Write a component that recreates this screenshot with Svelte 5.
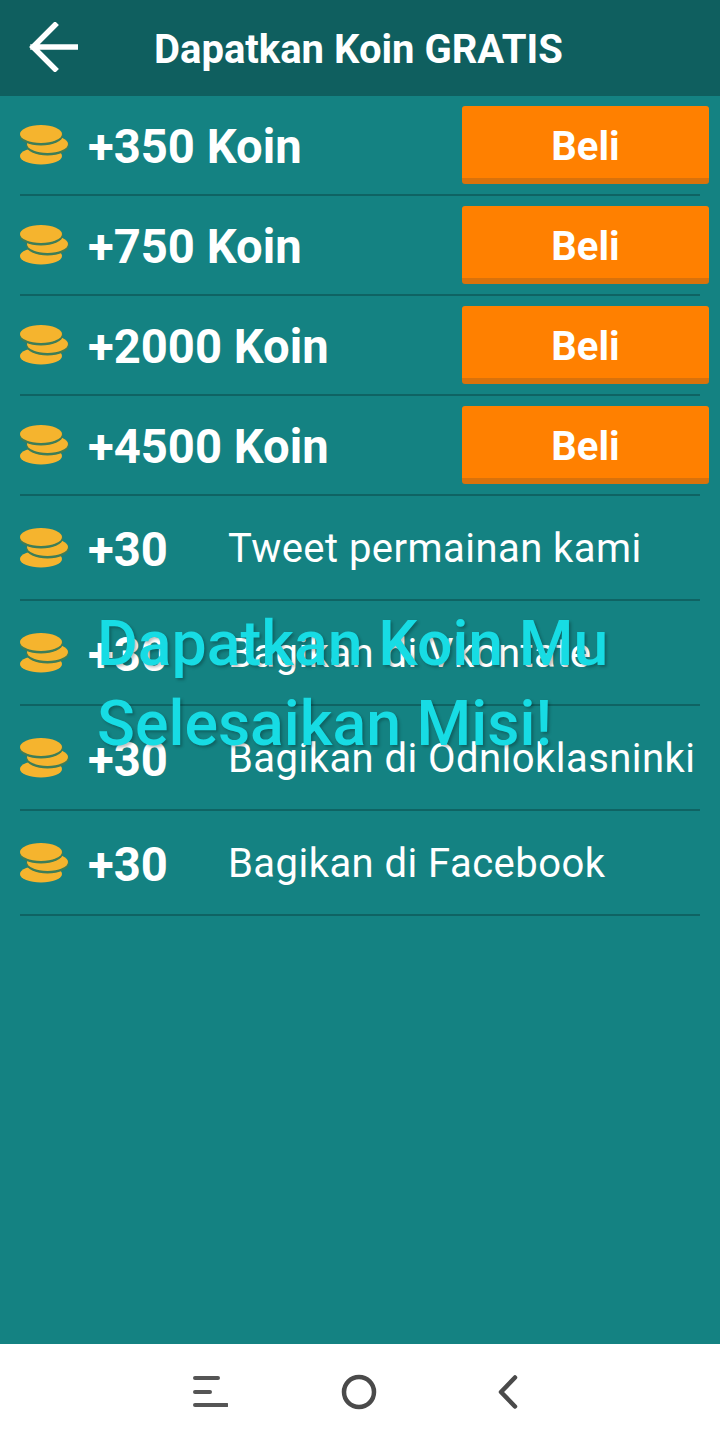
<script>
	const packs = ['+350 Koin', '+750 Koin', '+2000 Koin', '+4500 Koin'];
	const tasks = ['Tweet permainan kami', 'Bagikan di Vkontate', 'Bagikan di Odnloklasninki', 'Bagikan di Facebook'];
</script>

{#snippet coins()}
	<svg class="coins" viewBox="0 0 50 40" width="50" height="40" aria-hidden="true">
		<ellipse cx="21" cy="31" rx="21" ry="8.5" fill="#f5b42e" />
		<ellipse cx="27.5" cy="20.5" rx="21.5" ry="10" fill="#3d7d58" />
		<ellipse cx="27.5" cy="19" rx="20.5" ry="9" fill="#f5b42e" />
		<ellipse cx="21" cy="10.5" rx="22" ry="10" fill="#3d7d58" />
		<ellipse cx="21" cy="9" rx="21" ry="9" fill="#f5b42e" />
	</svg>
{/snippet}

<div class="screen">
	<header>
		<svg class="back" viewBox="0 0 50 50" width="50" height="50" aria-label="Kembali">
			<path d="M49 25H5M27 3 5 25l22 22" fill="none" stroke="#fff" stroke-width="5.5" stroke-linecap="square" />
		</svg>
		<h1>Dapatkan Koin GRATIS</h1>
	</header>

	<main>
		{#each packs as pack}
			<div class="row pack">
				{@render coins()}
				<span class="amount">{pack}</span>
				<button>Beli</button>
			</div>
		{/each}
		{#each tasks as task}
			<div class="row task">
				{@render coins()}
				<span class="amount short">+30</span>
				<span class="label">{task}</span>
			</div>
		{/each}

		<p class="toast">Dapatkan Koin Mu<br />Selesaikan Misi!</p>
	</main>

	<nav>
		<svg viewBox="0 0 36 34" width="36" height="34" aria-label="Menu">
			<path d="M3 3h23M3 17h15M3 30h32" fill="none" stroke="#555" stroke-width="4" stroke-linecap="round" />
		</svg>
		<svg viewBox="0 0 36 36" width="36" height="36" aria-label="Beranda">
			<circle cx="18" cy="18" r="15" fill="none" stroke="#4a4a4a" stroke-width="4.5" />
		</svg>
		<svg class="chevron" viewBox="0 0 22 36" width="22" height="36" aria-label="Kembali">
			<path d="M17 3.5 3 18l14 14.5" fill="none" stroke="#4a4a4a" stroke-width="4.5" stroke-linecap="round" stroke-linejoin="round" />
		</svg>
	</nav>
</div>

<style>
	* {
		box-sizing: border-box;
	}

	:global(body) {
		margin: 0;
	}

	.screen {
		display: flex;
		flex-direction: column;
		width: 720px;
		height: 1440px;
		background: #148282;
		font-family: Roboto, sans-serif;
		color: #fff;
	}

	header {
		display: flex;
		align-items: center;
		flex: 0 0 96px;
		padding: 0 0 0 28px;
		background: #0f5f5f;
	}

	.back {
		flex: none;
		margin-top: -2px;
	}

	h1 {
		margin: 2px 0 0 76px;
		font-size: 40px;
		font-weight: 700;
	}

	main {
		position: relative;
		flex: 1;
		padding: 0 20px;
	}

	.row {
		display: flex;
		align-items: center;
		border-bottom: 2px solid #0f6363;
	}

	.pack {
		height: 100px;
	}

	.task {
		height: 105px;
	}

	.coins {
		flex: none;
	}

	.amount {
		margin-left: 18px;
		padding-top: 4px;
		font-size: 47.2px;
		font-weight: 700;
	}

	.short {
		width: 140px;
	}

	.label {
		padding-top: 2px;
		font-size: 40px;
		white-space: nowrap;
		letter-spacing: 0.45px;
	}

	button {
		width: 247px;
		height: 78px;
		margin: 0 -9px 0 auto;
		padding: 8px 0 0;
		border: 0;
		border-bottom: 6px solid #d9720b;
		border-radius: 3px;
		background: #ff8000;
		color: #fff;
		font: 700 40px Roboto, sans-serif;
	}

	.toast {
		position: absolute;
		left: 97px;
		top: 508px;
		margin: 0;
		color: #17dce4;
		font-size: 62.6px;
		font-weight: 500;
		line-height: 80px;
		white-space: nowrap;
		text-shadow: 2px 2px 3px rgba(0, 0, 0, 0.25);
	}

	nav {
		display: flex;
		align-items: center;
		flex: 0 0 96px;
		gap: 113px;
		padding: 0 0 0 192px;
		background: #fff;
	}

	.chevron {
		margin-left: 8px;
	}
</style>
